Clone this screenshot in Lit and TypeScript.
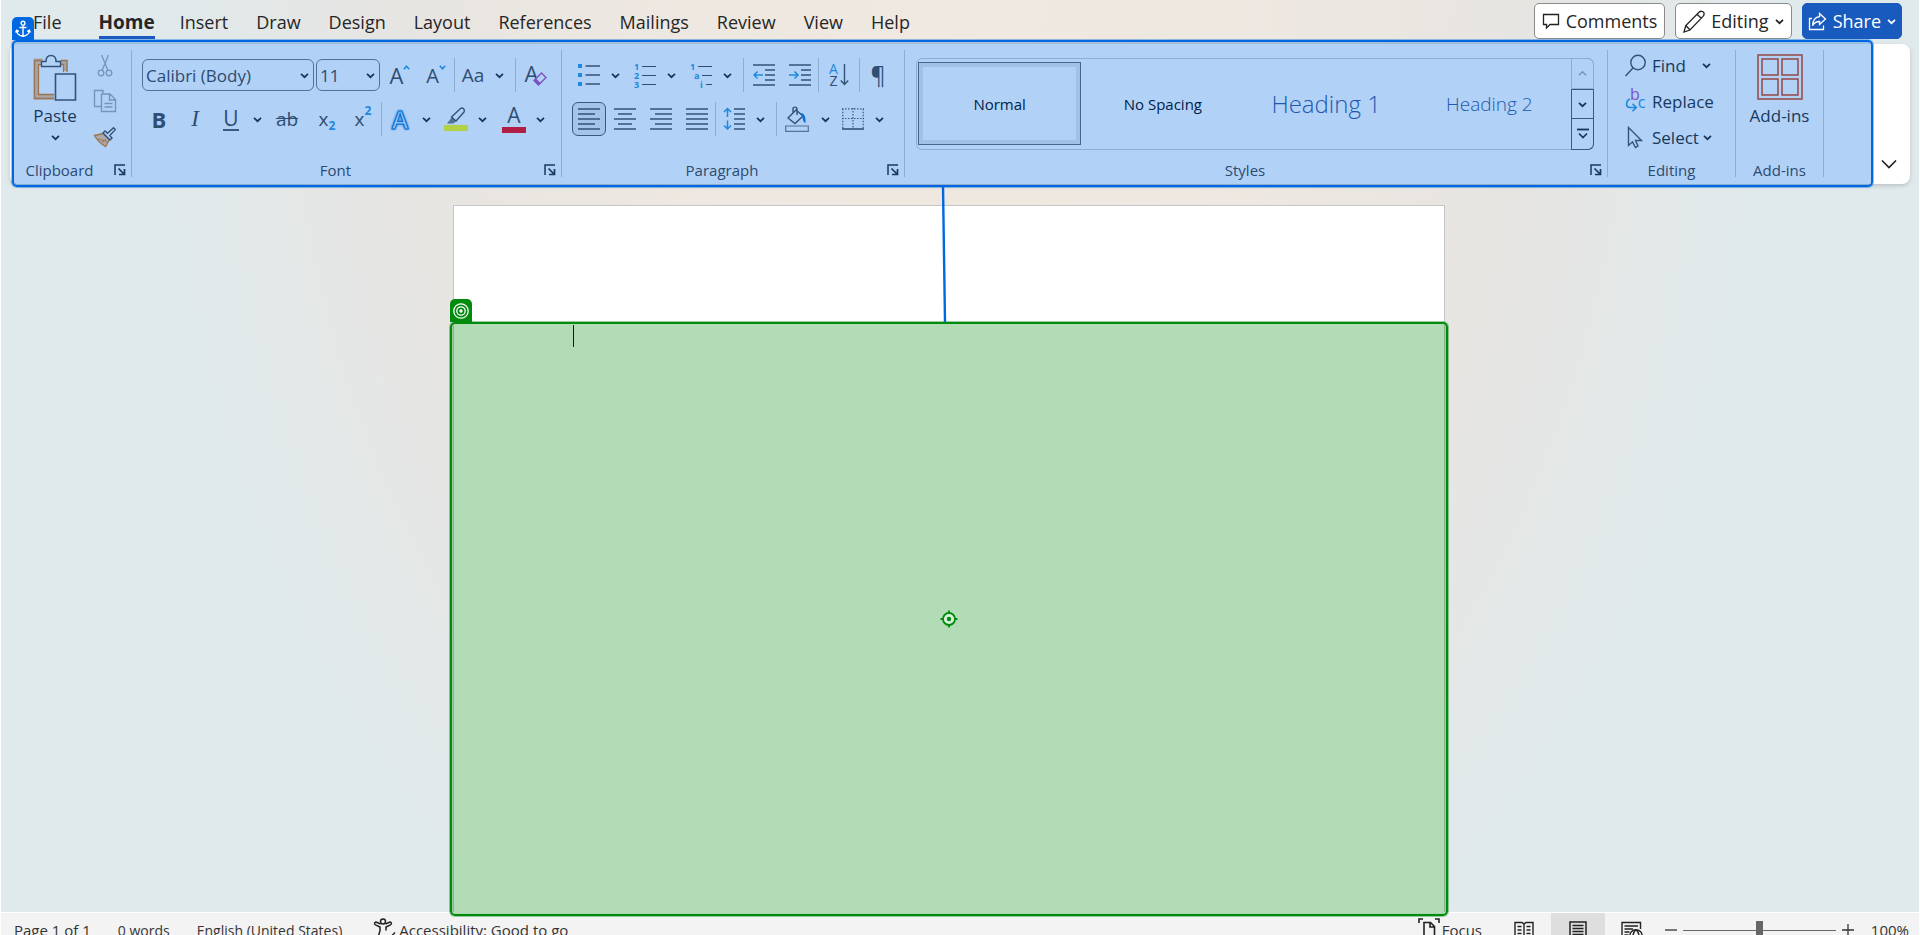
import { LitElement, html, svg, css, TemplateResult } from "lit";
import { customElement, state } from "lit/decorators.js";

const BLUE = "#2b99dd";
const INK = "#4a4a4a";
const PURPLE = "#b048b8";

const icon = (w: number, h: number, body: unknown) => html`<svg
  width=${w} height=${h} viewBox="0 0 ${w} ${h}" fill="none" aria-hidden="true">${body}</svg>`;

const line = (x1: number, y: number, x2: number, color = INK) =>
  svg`<path d="M${x1} ${y}H${x2}" stroke=${color} stroke-width="1.5"/>`;

const chevron = (color = "#222") =>
  html`<svg width="9" height="9" viewBox="0 0 9 9" fill="none" aria-hidden="true">
    <path d="M1 2.8L4.5 6.2L8 2.8" stroke=${color} stroke-width="1.7" /></svg>`;

const paragraphLines = (rows: number[][]) =>
  icon(22, 22, rows.map((r, i) => line(r[0], 1 + i * 5, r[1])));

const icons = {
  anchor: icon(16, 18, svg`<g stroke="#fff" stroke-width="1.4">
    <circle cx="8" cy="3.2" r="1.9"/><path d="M8 5.2V16M4.5 7.5H11.5M1.5 10.5C2 14 4.500 15.800 8 16.200C11.500 15.800 14 14 14.500 10.500M.6 12.600L1.600 10.200L3.800 11.400M15.400 12.600L14.400 10.200L12.200 11.400"/></g>`),
  bullseye: icon(16, 16, svg`<g stroke="#fff" stroke-width="1.3"><circle cx="8" cy="8" r="7.2"/><circle cx="8" cy="8" r="4.2"/></g><circle cx="8" cy="8" r="1.7" fill="#fff"/>`),
  aim: icon(18, 18, svg`<circle cx="9" cy="9" r="6" fill="#d9f0da" stroke="#008a0e" stroke-width="1.8"/><circle cx="9" cy="9" r="2.2" fill="#008a0e"/><path d="M9 .5V3M9 15V17.500M.5 9H3M15 9H17.500" stroke="#008a0e" stroke-width="1.8"/>`),
  comment: icon(18, 18, svg`<path d="M1.500 2.500H16.500V12.500H8L4.500 16V12.500H1.500Z" stroke="#222" stroke-width="1.3"/>`),
  pencil: icon(22, 23, svg`<path d="M1 22L2.800 15.500L16 2.200C17.500.8 20 1 20.800 2.600C21.400 4 21 5.300 20 6.400L7 20L1 22ZM14 4.200L18.300 8.300M2.800 15.500L7 20" stroke="#222" stroke-width="1.3"/>`),
  share: icon(19, 19, svg`<path d="M4 6.500H1.500V17.500H15.500V13.500M11.500 1.500L17.500 7L11.500 12.500V9.500C8 9.500 6 10.800 4.500 13.800C4.800 8.500 7 5 11.500 4.600Z" stroke="#fff" stroke-width="1.3"/>`),
  paste: icon(44, 48, svg`<path d="M10 7H3V43H21" stroke="#f0c090" stroke-width="5"/><path d="M26 8.500H32.500V17" stroke="#f0c090" stroke-width="4"/>
    <path d="M8 6.500H1.500V44.500H21M28 6.500H34V18M9 10.500H5.500V40.500H21M28 10.500H30.500V18" stroke="#e07a10" stroke-width="1.300"/>
    <path d="M8.500 12.500V7.500H13C13 3.800 15 1.500 18 1.500S23 3.800 23 7.500H27.500V12.500Z" fill="#fff" stroke=${INK} stroke-width="1.4"/>
    <path d="M22.500 20H42.500V46H22.500Z" fill="#fff" stroke=${INK} stroke-width="1.6"/>`),
  cut: icon(16, 23, svg`<g stroke="#aaa" stroke-width="1.300"><path d="M4.500 1L11 16.500M11.500 1L5 16.500"/><circle cx="4" cy="19" r="2.800"/><circle cx="12" cy="19" r="2.800"/></g>`),
  copy: icon(24, 24, svg`<g stroke="#aaa" stroke-width="1.400"><path d="M8 17.500H1.500V1.500H10V4M8.500 5H17L22.500 10.500V22.500H8.500ZM16.500 5V11H22.500M11.500 14.500H19.500M11.500 18H19.500"/></g>`),
  painter: icon(24, 22, svg`<path d="M1.500 9.500L10 7.500L16.500 13.500L12.500 20.500C8 18 4 14 1.500 9.500Z" fill="#f7c599" stroke="#e07a10" stroke-width="1.400"/><path d="M5 13L14 15.500M9 17L13 13" stroke="#e07a10"/><path d="M10 7L12 5L14.500 7.300L20.500 1.800L22.300 3.600L16.800 9.600L19 12L17 14Z" fill="#fff" stroke=${INK} stroke-width="1.400"/>`),
  launcher: icon(12, 12, svg`<path d="M1 11V1H11" stroke="#262626" stroke-width="1.500"/><path d="M4.500 4.500L10 10M10.500 5V10.500H5" stroke="#262626" stroke-width="1.700"/>`),
  up: icon(7, 5, svg`<path d="M.8 4.200L3.500 1.200L6.200 4.200" stroke=${BLUE} stroke-width="1.600"/>`),
  down: icon(7, 5, svg`<path d="M.8 .8L3.500 3.800L6.200 .8" stroke=${BLUE} stroke-width="1.600"/>`),
  eraser: icon(14, 14, svg`<path d="M1 8.500L8.500 1L13 5.500L5.500 13Z" fill="#fff" stroke=${PURPLE} stroke-width="1.400"/><path d="M1 8.500L3 6.500L7.500 11L5.500 13Z" fill=${PURPLE}/>`),
  highlighter: icon(24, 26, svg`<path d="M3 17.500L8 11L12 15L9.500 17.500Z" fill="#777"/><path d="M7.500 11L16.500 2.500C18.500 1 21.500 3.500 20 6L12 15Z" stroke=${INK} stroke-width="1.400"/><path d="M0 19H24V25H0Z" fill="#ff0"/>`),
  bullets: icon(22, 22, [0, 9, 18].map(y => svg`<path d="M0 ${y}H4V${y + 4}H0Z" fill=${BLUE}/>${line(7.5, y + 2, 22)}`)),
  outdent: icon(22, 22, svg`${line(0, 1, 22)}${line(12, 6, 22)}${line(12, 11, 22)}${line(12, 16, 22)}${line(0, 21, 22)}<path d="M10 11H1M4.500 7.500L1 11L4.500 14.500" stroke=${BLUE} stroke-width="1.500"/>`),
  indent: icon(22, 22, svg`${line(0, 1, 22)}${line(12, 6, 22)}${line(12, 11, 22)}${line(12, 16, 22)}${line(0, 21, 22)}<path d="M0 11H9M5.500 7.500L9 11L5.500 14.500" stroke=${BLUE} stroke-width="1.500"/>`),
  arrowDown: icon(9, 22, svg`<path d="M4.500 0V20.500M.8 16.500L4.500 20.500L8.200 16.500" stroke=${INK} stroke-width="1.400"/>`),
  alignLeft: paragraphLines([[0, 22], [0, 17], [0, 22], [0, 17], [0, 22]]),
  alignCenter: paragraphLines([[0, 22], [4, 18], [0, 22], [4, 18], [0, 22]]),
  alignRight: paragraphLines([[0, 22], [5, 22], [0, 22], [5, 22], [0, 22]]),
  justify: paragraphLines([[0, 22], [0, 22], [0, 22], [0, 22], [0, 22]]),
  spacing: icon(22, 24, svg`<path d="M4.500 1.500V10M1 5L4.500 1.500L8 5M4.500 13.500V22M1 18.500L4.500 22L8 18.500" stroke=${BLUE} stroke-width="1.500"/>${[2, 7, 12, 17, 22].map(y => line(11, y, 22))}`),
  shading: icon(24, 26, svg`<path d="M3 12L11 4L18 10L10 17.500ZM8 7V3C8 .5 12 .5 12 3V9" fill="#fff" stroke=${INK} stroke-width="1.400"/><path d="M15 7C19 7 21 10 20.500 17C18.500 17 17.500 13 17.500 11Z" fill="#0a70d0"/><path d="M.7 20H23.300V25.300H.7Z" fill="#fff" stroke="#777" stroke-width="1.200"/>`),
  borders: icon(22, 22, svg`<g stroke="#555" stroke-width="1.200"><path d="M.8 .8V20M21.200 .8V20M0 .8H22" stroke-dasharray="1.500 1.500"/><path d="M11 0V20M0 10.500H22" stroke-dasharray="1.500 1.500"/></g><path d="M0 21H22" stroke=${INK} stroke-width="1.600"/>`),
  find: icon(23, 23, svg`<circle cx="14" cy="8.500" r="7.200" stroke=${INK} stroke-width="1.400"/><path d="M9 14L1.500 22" stroke=${INK} stroke-width="1.500"/>`),
  turn: icon(13, 14, svg`<path d="M5 1C.5 3 .5 9.500 5 9.500H11M7.500 5.800L11.300 9.500L7.500 13.200" stroke=${BLUE} stroke-width="1.600"/>`),
  pointer: icon(18, 23, svg`<path d="M2.500 1.500V19.500L6.500 15.800L9.500 21.500L12 20L9.500 14.500H15.500Z" stroke=${INK} stroke-width="1.400"/>`),
  addins: icon(46, 46, svg`<g stroke="#d83b01" stroke-width="1.500"><path d="M1 1H45V45H1Z"/><path d="M5 5H21V21H5ZM25 5H41V21H25ZM5 25H21V41H5ZM25 25H41V41H25Z"/></g>`),
  more: icon(12, 12, svg`<path d="M0 1.500H12" stroke="#222" stroke-width="1.800"/><path d="M2 5.500L6 9.500L10 5.500" stroke="#222" stroke-width="1.700"/>`),
  collapse: icon(16, 10, svg`<path d="M1 1.500L8 8.500L15 1.500" stroke="#222" stroke-width="1.700"/>`),
  person: icon(24, 24, svg`<g stroke="#222" stroke-width="1.500"><circle cx="10" cy="3.500" r="2.500"/><path d="M7.500 6L3 4C1.500 4 1 6 2.500 6.800L7 9V13L4.500 20.500M12.500 6L17 4C18.500 4 19 6 17.500 6.800L13 9V12.500"/><path d="M12 19L15 22L22 14.500"/></g>`),
  focus: icon(22, 24, svg`<g stroke="#222" stroke-width="1.600"><path d="M1 5V1H5M17 1H21V5M1 19V23H5M17 23H21V19M6 4.500H12.500L16.500 8.500V20.500H6ZM12 4.500V9H16.500"/></g>`),
  read: icon(20, 22, svg`<g stroke="#222" stroke-width="1.400"><path d="M1 1.500H8L10 3L12 1.500H19V18.500H12L10 20L8 18.500H1ZM10 3V20M3.500 5.500H7.500M3.500 9H7.500M3.500 12.500H7.500M3.500 15.500H7.500M12.500 5.500H16.500M12.500 9H16.500M12.500 12.500H16.500M12.500 15.500H16.500"/></g>`),
  print: icon(18, 22, svg`<g stroke="#222" stroke-width="1.500"><path d="M1 1H17V21H1ZM3.500 4.500H14.500M3.500 7.500H14.500M3.500 10.500H14.500M3.500 13.500H14.500M3.500 16.500H14.500"/></g>`),
  web: icon(22, 22, svg`<g stroke="#222" stroke-width="1.400"><path d="M8 20.500H1V1.500H19.500V8M3.500 5H17M3.500 8H12M3.500 11H8.500M3.500 14H7.500"/><circle cx="15" cy="15" r="6.200"/><path d="M8.800 15H21.200M15 8.800C11 12 11 18 15 21.200C19 18 19 12 15 8.800Z"/></g>`),
};

const listIcon = (marks: string[], stepped: boolean) => html`<span class="list">
  ${marks.map((m, i) => html`<span class="list-row ${stepped ? `step${i}` : ""}"><i>${m}</i><b></b></span>`)}
</span>`;

@customElement("app-root")
export class AppRoot extends LitElement {
  @state() private tab = "Home";
  @state() private align = "Align left";
  @state() private textStyle = "Normal";

  static styles = css`
    :host {
      display: flex;
      flex-direction: column;
      height: 100vh;
      overflow: hidden;
      box-sizing: border-box;
      border: solid #fff;
      border-width: 0 1px;
      font-family: "Open Sans", "Noto Sans", sans-serif;
      font-size: 17px;
      color: #262626;
      background: radial-gradient(ellipse 42% 120% at 50% 0, #f0e9e2 0%, #ece7e0 45%, #e7e5e2 70%, #e0e9eb 100%);
    }
    * { box-sizing: border-box; }
    button, select, input { font: inherit; color: inherit; margin: 0; }
    button { background: none; border: 0; padding: 0; display: flex; align-items: center; justify-content: center; white-space: nowrap; }
    svg { display: block; flex: none; }

    .top { display: flex; align-items: flex-start; height: 44px; padding: 3px 17px 0 18px; flex: none; }
    .tabs { display: flex; flex: 1; font-size: 18px; }
    .tab { height: 36px; padding: 4px 14px 0; }
    .tab.first { margin-right: 9px; }
    .tab span { height: 32px; line-height: 31px; }
    .tab.on { padding-right: 11px; }
    .tab.on span { font-weight: 700; font-size: 19px; border-bottom: 3px solid #185abd; }
    .actions { display: flex; gap: 10px; font-size: 18px; }
    .action { height: 36px; padding: 0 7px; gap: 6px; background: #fff; border: 1px solid #8a8a8a; border-radius: 5px; }
    .action.primary { background: #185abd; border-color: #185abd; color: #fff; padding: 0 5px; }

    .ribbon { position: relative; z-index: 2; margin: 0 9px; flex: none; }
    .panel { display: flex; height: 140px; padding: 6px 0 7px; background: #fff; border-radius: 8px; box-shadow: 0 2px 4px rgba(0, 0, 0, 0.16); }
    .group { display: flex; flex-direction: column; border-right: 1px solid #ccc; flex: none; }
    .clipboard { width: 122px; }
    .font { width: 430px; }
    .para { width: 343px; }
    .styles { flex: 1 1 auto; min-width: 0; }
    .editing { width: 128px; }
    .addin { width: 88px; }
    .rows { flex: 1; display: flex; flex-direction: column; gap: 10px; padding: 8px 0 0 9px; }
    .row { display: flex; height: 34px; align-items: center; }
    .caption { display: flex; height: 14px; align-items: center; font-size: 15px; color: #404040; flex: none; }
    .caption span { flex: 1; text-align: center; }
    .launch { width: 22px; height: 22px; }

    .clip { flex: 1; display: flex; }
    .paste { flex: none; width: 62px; margin-left: 14px; flex-direction: column; justify-content: flex-start; padding-top: 4px; height: 102px; }
    .paste span { line-height: 22px; margin: 3px 0 6px; }
    .clip-side { display: flex; flex-direction: column; gap: 10px; padding-top: 2px; }
    .clip-side button { width: 38px; height: 26px; }

    .field { position: relative; display: flex; align-items: center; height: 32px; border: 1px solid #777; border-radius: 6px; margin-right: 2px; background: #fff; }
    .field.family { width: 172px; margin-left: 1px; }
    .field.size { width: 64px; margin-right: 0; }
    .field select { appearance: none; border: 0; background: none; width: 100%; height: 100%; padding: 0 20px 0 3px; outline: 0; color: #404040; }
    .field svg { position: absolute; right: 4px; pointer-events: none; }

    .t36 { width: 36px; height: 34px; color: #444; }
    .t40 { width: 40px; height: 34px; color: #444; }
    .t44 { width: 44px; height: 34px; color: #444; }
    .drop { width: 16px; height: 34px; }
    .pad2 { margin-left: 2px; }
    .pad4 { margin-left: 4px; }
    .pad6 { margin-left: 6px; }
    .sep { width: 1px; height: 34px; background: #ccc; flex: none; }
    .sep.far { margin-left: 8px; }
    .on-tool { width: 34px; margin: 0 1px; border: 1px solid #555; border-radius: 6px; background: #ececec; }
    .glyph { font-size: 22px; }
    .glyph.small { font-size: 20px; }
    .raised { align-self: flex-start; margin-top: 7px; }
    .case { font-size: 19px; }
    .erase { align-items: flex-start; }
    .erase svg { margin: 14px 0 0 -5px; }
    .bold { font-size: 22px; font-weight: 700; }
    .italic { font: italic 23px "Liberation Serif", serif; }
    .under span { font-size: 21px; line-height: 22px; border-bottom: 2px solid #555; }
    .strike { font-size: 19px; text-decoration: line-through; }
    .script { font-size: 19px; }
    .script small { font-size: 12px; font-weight: 700; color: #2b99dd; }
    .script .lo { align-self: flex-end; margin-bottom: 2px; }
    .script .hi { align-self: flex-start; }
    .effect { font-size: 25px; font-weight: 600; color: #d8f0ff; -webkit-text-stroke: 1px #0a70d0; text-shadow: 0 0 2px #0a70d0, 0 0 3px #0a70d0; }
    .ink { flex-direction: column; }
    .ink span { font-size: 21px; line-height: 18px; }
    .ink b { width: 24px; height: 6px; background: #f00; margin-top: 3px; }
    .pilcrow { font-size: 23px; }
    .sort { gap: 2px; }
    .sort span { display: grid; font-size: 14px; line-height: 12px; }
    .sort span i { font-style: normal; color: #2b99dd; }

    .list { display: grid; width: 22px; }
    .list-row { display: flex; align-items: center; gap: 3px; height: 9px; }
    .list-row i { font: 700 9px/9px "Open Sans", sans-serif; color: #2b99dd; }
    .list-row b { flex: 1; height: 1px; background: #444; }
    .step1 { padding-left: 4px; }
    .step2 { padding-left: 10px; }

    .gallery { display: flex; height: 92px; margin: 8px 13px 0 11px; border: 1px solid #ccc; border-radius: 6px; }
    .cards { flex: 1; display: grid; grid-template-columns: repeat(4, 1fr); padding: 3px 1px 4px; }
    .card { color: #000; font-size: 15px; border: 1px solid transparent; }
    .card.on { border-color: #666; box-shadow: inset 0 0 0 4px #e8e8e8; }
    .card.h1 { font-size: 24px; font-weight: 300; color: #2f5496; }
    .card.h2 { font-size: 19px; font-weight: 300; color: #2f5496; }
    .scroll { display: grid; grid-template-rows: 31px 30px 31px; width: 23px; margin: -1px; }
    .scroll button { border: 1px solid #555; }
    .scroll button:first-child { border-color: #ccc; border-radius: 0 6px 0 0; }
    .scroll button:last-child { border-radius: 0 0 6px 0; border-top: 0; }

    .edit { flex: 1; display: flex; flex-direction: column; padding: 0 0 0 14px; }
    .edit button { height: 36px; padding-bottom: 5px; justify-content: flex-start; gap: 4px; }
    .edit .pic { width: 26px; display: flex; justify-content: center; }
    .edit .word { width: 34px; margin-right: 12px; }
    .edit .swap { align-items: flex-end; color: #2b99dd; font-size: 16px; line-height: 20px; position: relative; }
    .swap i { position: absolute; left: 8px; top: -8px; font-style: normal; color: #b048b8; }
    .addin-btn { flex: 1; flex-direction: column; justify-content: flex-start; padding-top: 4px; }
    .addin-btn span { line-height: 22px; margin-top: 5px; }
    .collapse { margin-left: 44px; align-self: flex-end; flex: none; width: 42px; height: 26px; }

    .mark { position: absolute; z-index: 3; pointer-events: none; border-style: solid; border-width: 2px; border-radius: 5px; }
    .mark.source { inset: -4px 37px -3px 2px; border-color: #0068e0; background: rgba(0, 104, 224, 0.3); box-shadow: 0 0 0 1px rgba(0, 104, 224, 0.4); }
    .mark.dest { inset: 116px -4px -4px -4px; border-color: #008a0e; background: rgba(0, 140, 10, 0.3); box-shadow: 0 0 0 1px rgba(0, 138, 14, 0.4); display: grid; place-items: center; }
    .badge { position: absolute; left: -2px; top: -25px; width: 22px; height: 23px; display: grid; place-items: center; border-radius: 5px 5px 0 0; }
    .source .badge { background: #0068e0; }
    .dest .badge { background: #008a0e; }
    .link { position: absolute; z-index: 3; left: 487px; top: -20px; }

    .canvas { flex: 1; min-height: 0; display: flex; justify-content: center; padding: 21px 22px 0 0; position: relative; z-index: 1; }
    .page { position: relative; width: 100%; max-width: 992px; background: #fff; border: 1px solid #c6c6c6; border-bottom: 0; padding: 119px 119px 0; }
    .caret { width: 1px; height: 22px; background: #000; }

    .status { flex: none; height: 23px; overflow: hidden; border-top: 1px solid #fff; background: #f3f3f3; font-size: 15px; color: #333; }
    .bar { display: flex; align-items: center; height: 34px; padding: 0 10px 0 13px; }
    .bar .info { display: flex; flex: 1; align-items: center; gap: 27px; }
    .bar .info button, .bar .focus { gap: 2px; }
    .bar .info .dim { font-size: 14px; }
    .bar .info .check { margin-left: 4px; }
    .focus { margin-right: 15px; }
    .view { width: 54px; height: 34px; }
    .view svg { margin-top: 3px; }
    .view.on { background: #dedede; }
    .step { width: 24px; height: 32px; }
    .zoom { appearance: none; width: 153px; height: 32px; background: linear-gradient(#666, #666) center / 100% 1px no-repeat; }
    .zoom::-webkit-slider-thumb { appearance: none; width: 7px; height: 18px; background: #666; border: 0; }
    .percent { width: 49px; justify-content: flex-end; }
  `;

  private drop(label: string) {
    return html`<button class="drop" aria-label=${label}>${chevron()}</button>`;
  }

  private tool(label: string, cls: string, body: unknown) {
    return html`<button class=${cls} aria-label=${label}>${body}</button>`;
  }

  private alignTool(label: string, body: TemplateResult) {
    const on = this.align === label;
    return html`<button class="t36 ${on ? "on-tool" : ""}" aria-label=${label} aria-pressed=${on}
      @click=${() => (this.align = label)}>${body}</button>`;
  }

  private caption(text: string, launcher = true) {
    return html`<div class="caption"><span>${text}</span>${launcher
      ? html`<button class="launch" aria-label="${text} settings">${icons.launcher}</button>` : ""}</div>`;
  }

  private renderTop() {
    const tabs = ["File", "Home", "Insert", "Draw", "Design", "Layout", "References", "Mailings", "Review", "View", "Help"];
    return html`<header class="top">
      <nav class="tabs" role="tablist">
        ${tabs.map((t, i) => html`<button role="tab" aria-selected=${this.tab === t}
          class="tab ${i === 0 ? "first" : ""} ${this.tab === t ? "on" : ""}"
          @click=${() => (this.tab = t)}><span>${t}</span></button>`)}
      </nav>
      <div class="actions">
        <button class="action">${icons.comment}<span>Comments</span></button>
        <button class="action">${icons.pencil}<span>Editing</span>${chevron()}</button>
        <button class="action primary">${icons.share}<span>Share</span>${chevron("#fff")}</button>
      </div>
    </header>`;
  }

  private renderFont() {
    return html`<section class="group font" aria-label="Font">
      <div class="rows">
        <div class="row">
          <div class="field family"><select aria-label="Font family"><option>Calibri (Body)</option></select>${chevron()}</div>
          <div class="field size"><select aria-label="Font size"><option>11</option></select>${chevron()}</div>
          ${this.tool("Grow font", "t36 pad2 glyph", html`A<span class="raised">${icons.up}</span>`)}
          ${this.tool("Shrink font", "t36 glyph small", html`A<span class="raised">${icons.down}</span>`)}
          <i class="sep"></i>
          ${this.tool("Change case", "t36 case", "Aa")}${this.drop("Case options")}
          <i class="sep far"></i>
          ${this.tool("Clear formatting", "t40 glyph erase", html`A${icons.eraser}`)}
        </div>
        <div class="row">
          ${this.tool("Bold", "t36 bold", "B")}
          ${this.tool("Italic", "t36 italic", "I")}
          ${this.tool("Underline", "t36 under", html`<span>U</span>`)}${this.drop("Underline options")}
          ${this.tool("Strikethrough", "t44 strike", "ab")}
          ${this.tool("Subscript", "t36 script", html`x<small class="lo">2</small>`)}
          ${this.tool("Superscript", "t36 script", html`x<small class="hi">2</small>`)}
          <i class="sep"></i>
          ${this.tool("Text effects", "t36 effect", "A")}${this.drop("Effect options")}
          ${this.tool("Highlight", "t36 pad4", icons.highlighter)}${this.drop("Highlight colours")}
          ${this.tool("Font colour", "t36 pad6 ink", html`<span>A</span><b></b>`)}${this.drop("Font colours")}
        </div>
      </div>
      ${this.caption("Font")}
    </section>`;
  }

  private renderParagraph() {
    return html`<section class="group para" aria-label="Paragraph">
      <div class="rows">
        <div class="row">
          ${this.tool("Bullets", "t36", icons.bullets)}${this.drop("Bullet options")}
          ${this.tool("Numbering", "t36 pad4", listIcon(["1", "2", "3"], false))}${this.drop("Numbering options")}
          ${this.tool("Multilevel list", "t36 pad4", listIcon(["1", "a", "i"], true))}${this.drop("Multilevel options")}
          <i class="sep far"></i>
          ${this.tool("Decrease indent", "t36 pad2", icons.outdent)}
          ${this.tool("Increase indent", "t36", icons.indent)}
          <i class="sep"></i>
          ${this.tool("Sort", "t40 sort", html`<span><i>A</i>Z</span>${icons.arrowDown}`)}
          <i class="sep"></i>
          ${this.tool("Show marks", "t36 pilcrow", "¶")}
        </div>
        <div class="row">
          ${this.alignTool("Align left", icons.alignLeft)}
          ${this.alignTool("Center", icons.alignCenter)}
          ${this.alignTool("Align right", icons.alignRight)}
          ${this.alignTool("Justify", icons.justify)}
          <i class="sep"></i>
          ${this.tool("Line spacing", "t36", icons.spacing)}${this.drop("Spacing options")}
          <i class="sep far"></i>
          ${this.tool("Shading", "t40", icons.shading)}${this.drop("Shading colours")}
          ${this.tool("Borders", "t36 pad2", icons.borders)}${this.drop("Border options")}
        </div>
      </div>
      ${this.caption("Paragraph")}
    </section>`;
  }

  private renderStyles() {
    const cards = [["Normal", ""], ["No Spacing", ""], ["Heading 1", "h1"], ["Heading 2", "h2"]];
    return html`<section class="group styles" aria-label="Styles">
      <div class="clip"><div class="gallery clip">
        <div class="cards">${cards.map(([name, cls]) => html`<button
          class="card ${cls} ${this.textStyle === name ? "on" : ""}"
          @click=${() => (this.textStyle = name)}>${name}</button>`)}</div>
        <div class="scroll">
          <button aria-label="Previous styles" disabled><svg width="9" height="9" viewBox="0 0 9 9" fill="none"><path d="M1 6.200L4.500 2.800L8 6.200" stroke="#aaa" stroke-width="1.600"/></svg></button>
          <button aria-label="Next styles">${chevron()}</button>
          <button aria-label="More styles">${icons.more}</button>
        </div>
      </div></div>
      ${this.caption("Styles")}
    </section>`;
  }

  render() {
    return html`
      ${this.renderTop()}
      <div class="ribbon">
        <div class="panel">
          <section class="group clipboard" aria-label="Clipboard">
            <div class="clip">
              <button class="paste">${icons.paste}<span>Paste</span>${chevron()}</button>
              <div class="clip-side">
                <button aria-label="Cut">${icons.cut}</button>
                <button aria-label="Copy">${icons.copy}</button>
                <button aria-label="Format painter">${icons.painter}</button>
              </div>
            </div>
            ${this.caption("Clipboard")}
          </section>
          ${this.renderFont()} ${this.renderParagraph()} ${this.renderStyles()}
          <section class="group editing" aria-label="Editing">
            <div class="edit">
              <button><span class="pic">${icons.find}</span><span class="word">Find</span>${chevron()}</button>
              <button><span class="pic swap">${icons.turn}<i>b</i>c</span>Replace</button>
              <button><span class="pic">${icons.pointer}</span>Select${chevron()}</button>
            </div>
            ${this.caption("Editing", false)}
          </section>
          <section class="group addin" aria-label="Add-ins">
            <button class="addin-btn">${icons.addins}<span>Add-ins</span></button>
            ${this.caption("Add-ins", false)}
          </section>
          <button class="collapse" aria-label="Collapse ribbon">${icons.collapse}</button>
        </div>
        <div class="mark source"><span class="badge">${icons.anchor}</span></div>
      </div>
      <main class="canvas">
        <article class="page" aria-label="Document">
          <div class="caret"></div>
          <div class="mark dest"><span class="badge">${icons.bullseye}</span>${icons.aim}</div>
          <svg class="link" width="6" height="136" viewBox="0 0 6 136" aria-hidden="true"><path d="M2 0L4 136" stroke="#0068e0" stroke-width="2.400"/></svg>
        </article>
      </main>
      <footer class="status">
        <div class="bar">
          <div class="info">
            <button>Page 1 of 1</button><button class="dim">0 words</button><button class="dim">English (United States)</button>
            <button class="check">${icons.person}<span>Accessibility: Good to go</span></button>
          </div>
          <button class="focus">${icons.focus}<span>Focus</span></button>
          <button class="view" aria-label="Read mode">${icons.read}</button>
          <button class="view on" aria-label="Print layout">${icons.print}</button>
          <button class="view" aria-label="Web layout">${icons.web}</button>
          <button class="step" aria-label="Zoom out">${icon(12, 12, svg`<path d="M0 6H12" stroke="#333" stroke-width="1.300"/>`)}</button>
          <input class="zoom" type="range" min="0" max="200" value="100" aria-label="Zoom" />
          <button class="step" aria-label="Zoom in">${icon(12, 12, svg`<path d="M0 6H12M6 0V12" stroke="#333" stroke-width="1.300"/>`)}</button>
          <button class="percent">100%</button>
        </div>
      </footer>`;
  }
}
